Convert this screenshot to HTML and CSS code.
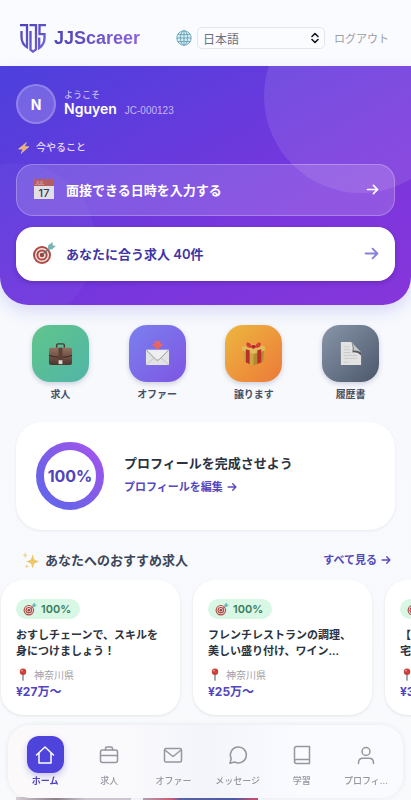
FILE: index.html
```html
<!DOCTYPE html>
<html lang="ja">
<head>
    <meta charset="UTF-8">
    <meta name="viewport" content="width=device-width, initial-scale=1.0">
    <title>JJScareer</title>
    <link rel="stylesheet" href="styles.css">
</head>
<body>

<!-- 共通アイコン -->
<svg class="sprite" aria-hidden="true">
    <defs>
        <linearGradient id="brand" gradientUnits="userSpaceOnUse" x1="0" y1="0" x2="26" y2="29">
            <stop offset="0" stop-color="#4b41b8"/>
            <stop offset="1" stop-color="#7566d6"/>
        </linearGradient>
        <linearGradient id="ring" x1="0" y1="1" x2="1" y2="0">
            <stop offset="0" stop-color="#6366f1"/>
            <stop offset="0.25" stop-color="#6c62e8"/>
            <stop offset="0.8" stop-color="#9557ea"/>
            <stop offset="1" stop-color="#a855f7"/>
        </linearGradient>
        <linearGradient id="leather" x1="0" y1="0" x2="0" y2="1">
            <stop offset="0" stop-color="#95705f"/>
            <stop offset="1" stop-color="#4d342c"/>
        </linearGradient>
    </defs>
    <symbol id="target" viewBox="0 0 24 24">
        <circle cx="10" cy="14" r="9" fill="#b04a44"/>
        <circle cx="10" cy="14" r="7" fill="#f0e6e2"/>
        <circle cx="10" cy="14" r="5.6" fill="#b04a44"/>
        <circle cx="10" cy="14" r="3.6" fill="#f0e6e2"/>
        <circle cx="10" cy="14" r="2.2" fill="#a83a35"/>
        <path d="M10 14 19 6" stroke="#566f77" stroke-width="1.4"/>
        <path d="m15.5 8.500.8-4.200L20.500 1l.2 3.200 3 .7-3.600 3.700z" fill="#79b5b8"/>
    </symbol>
    <symbol id="pin" viewBox="0 0 12 16">
        <path d="M6 7v8" stroke="#777e86" stroke-width="1.6" stroke-linecap="round"/>
        <circle cx="6" cy="4.5" r="4" fill="#c9413c"/>
        <circle cx="4.7" cy="3.2" r="1.2" fill="#ef9a94"/>
    </symbol>
    <symbol id="arrow" viewBox="0 0 14 14">
        <path d="M1.500 7h11M8 2.500 12.500 7 8 11.500" fill="none" stroke="currentColor" stroke-width="1.8" stroke-linecap="round" stroke-linejoin="round"/>
    </symbol>
</svg>

<header class="header">
    <a class="brand" href="#">
        <svg class="brand-mark" viewBox="0 0 26 29" aria-hidden="true">
            <g fill="none" stroke="url(#brand)" stroke-width="2.3">
                <path d="M0 1.200h7v22C3.200 21 1.500 17.500 1.500 12.500V7"/>
                <path d="M9.500 1.200H16v24.300L13 27.600l-2.500-2V7"/>
                <path d="M26 1.200h-6.500v9h5v4c0 4.500-1.800 7.300-5.300 9.800V13.500"/>
            </g>
        </svg>
        <span class="brand-name">JJScareer</span>
    </a>
    <div class="header-tools">
        <svg class="globe" viewBox="0 0 16 16" aria-hidden="true">
            <circle cx="8" cy="8" r="7.2" fill="#d8eef4"/>
            <g fill="none" stroke="#6fa9bb">
                <circle cx="8" cy="8" r="7.2"/>
                <ellipse cx="8" cy="8" rx="3.5" ry="7.2"/>
                <path d="M8 1v14M1 8h14M2 4.500h12M2 11.500h12"/>
            </g>
        </svg>
        <div class="lang">
            <select class="lang-select" aria-label="言語">
                <option>日本語</option>
                <option>English</option>
            </select>
            <svg class="lang-icon" viewBox="0 0 8 12" aria-hidden="true">
                <path d="M1 4.500 4 1.500l3 3M1 7.500l3 3 3-3" fill="none" stroke="#16181d" stroke-width="1.6" stroke-linecap="round" stroke-linejoin="round"/>
            </svg>
        </div>
        <a class="logout" href="#">ログアウト</a>
    </div>
</header>

<main>
    <section class="hero">
        <div class="user">
            <div class="avatar">N</div>
            <div>
                <p class="welcome">ようこそ</p>
                <p class="user-line"><span class="user-name">Nguyen</span><span class="user-id">JC-000123</span></p>
            </div>
        </div>

        <h2 class="todo-title">
            <svg class="bolt" viewBox="0 0 12 12" aria-hidden="true">
                <path d="M8.500.5.500 7l4.600.2L3 11.500l8-6.800-4.700-.1z" fill="#f0b06a" stroke="#f7d9b0" stroke-width=".5"/>
            </svg>
            今やること
        </h2>

        <a class="todo" href="#">
            <svg class="todo-icon" viewBox="0 0 24 24" aria-hidden="true">
                <path d="M2 3h20v19H2z" fill="#e2e0e6"/>
                <path d="M2 2h20v7H2z" fill="#b45e62"/>
                <text class="cal-month" x="3" y="8">JUL</text>
                <text class="cal-day" x="12" y="19.5" text-anchor="middle">17</text>
            </svg>
            <span class="todo-text">面接できる日時を入力する</span>
            <svg class="todo-arrow" aria-hidden="true"><use href="#arrow"/></svg>
        </a>
        <a class="todo todo-white" href="#">
            <svg class="todo-icon" aria-hidden="true"><use href="#target"/></svg>
            <span class="todo-text">あなたに合う求人 40件</span>
            <svg class="todo-arrow" aria-hidden="true"><use href="#arrow"/></svg>
        </a>
    </section>

    <nav class="shortcuts">
        <a class="shortcut" href="#">
            <span class="tile tile-green">
                <svg class="tile-icon" viewBox="0 0 26 26" aria-hidden="true">
                    <path d="M9 7V4.500Q9 3 10.500 3h5Q17 3 17 4.500V7" fill="none" stroke="#4b382f" stroke-width="1.5"/>
                    <rect x="1" y="7" width="24" height="18" rx="2" fill="url(#leather)"/>
                    <path d="M1 15q12 4 24 0" fill="none" stroke="#3c2822"/>
                    <path d="M11 7h4v13h-4z" fill="#5a4035"/>
                    <path d="M11 20h4v4h-4z" fill="#ddd4cd"/>
                </svg>
            </span>
            求人
        </a>
        <a class="shortcut" href="#">
            <span class="tile tile-violet">
                <svg class="tile-icon" viewBox="0 0 26 26" aria-hidden="true">
                    <path d="M1 9h24v16H1z" fill="#e3e3e4"/>
                    <path d="m1 25 9-8M25 25l-9-8" stroke="#b9babd" stroke-width=".8"/>
                    <path d="m1.500 9.500 10 10q1.500 1.200 3 0l10-10" fill="#eee" stroke="#929498"/>
                    <path d="M10 0h6v3h3l-6 6-6-6h3z" fill="#e96660"/>
                </svg>
            </span>
            オファー
        </a>
        <a class="shortcut" href="#">
            <span class="tile tile-orange">
                <svg class="tile-icon" viewBox="0 0 26 26" aria-hidden="true">
                    <path d="m2 9 11 3v13.500L3 21z" fill="#cda544"/>
                    <path d="m24 9-11 3v13.500L23 21z" fill="#b38931"/>
                    <path d="m1 6 12-3 12 3v4l-12 3.500L1 10z" fill="#e0bb58"/>
                    <path d="m5 8.500 4 1V24l-4-1.700zM17 9.500l4-1v13.800L17 24z" fill="#b92f2a"/>
                    <path d="M12 6.500C9 .5 5 .5 5.500 4c.3 3 3.500 3.800 6.500 2.500zM14 6.500c3-6 7-6 6.500-2.500-.3 3-3.500 3.800-6.500 2.500z" fill="#d63c38"/>
                    <circle cx="13" cy="6" r="2" fill="#b62728"/>
                </svg>
            </span>
            譲ります
        </a>
        <a class="shortcut" href="#">
            <span class="tile tile-slate">
                <svg class="tile-icon" viewBox="0 0 26 26" aria-hidden="true">
                    <path d="M3 1h11l10 11v13H3z" fill="#e2e2e1"/>
                    <path d="M14 1q2 4 1 11 5-1 9 3v-3z" fill="#555b63"/>
                    <path d="M14 1 24 12q-4-3-8-2 1-5-2-9z" fill="#c7c9ca"/>
                    <path d="M6 6h6M6 9h7M6 12h7M6 15h14M6 18h14M6 22h5" stroke="#c8c9ca"/>
                </svg>
            </span>
            履歴書
        </a>
    </nav>

    <section class="profile">
        <div class="progress">
            <svg class="progress-ring" viewBox="0 0 68 68" aria-hidden="true">
                <circle cx="34" cy="34" r="30" fill="none" stroke="url(#ring)" stroke-width="8"/>
            </svg>
            <span class="progress-value">100%</span>
        </div>
        <div class="profile-body">
            <h2 class="profile-title">プロフィールを完成させよう</h2>
            <a class="link" href="#">プロフィールを編集 <svg class="link-arrow" aria-hidden="true"><use href="#arrow"/></svg></a>
        </div>
    </section>

    <section>
        <div class="section-head">
            <svg class="sparkles" viewBox="0 0 16 16" aria-hidden="true">
                <path d="m10 2 1.500 5L16 9l-4.500 1.800L10 15.500l-1.500-4.700L4 9l4.500-2z" fill="#edc765"/>
                <path d="m3 0 .8 2.300L6 3l-2.200.8L3 6l-.8-2.200L0 3l2.200-.7zM4.500 11l.6 1.900L7 13.500l-1.900.6-.6 1.900-.6-1.900-1.900-.6 1.900-.6z" fill="#f1d792"/>
            </svg>
            <h2 class="section-title">あなたへのおすすめ求人</h2>
            <a class="link" href="#">すべて見る <svg class="link-arrow" aria-hidden="true"><use href="#arrow"/></svg></a>
        </div>

        <div class="jobs">
            <article class="job">
                <span class="match"><svg class="match-icon" aria-hidden="true"><use href="#target"/></svg>100%</span>
                <h3 class="job-title">おすしチェーンで、スキルを身につけましょう！</h3>
                <p class="place"><svg class="pin" aria-hidden="true"><use href="#pin"/></svg>神奈川県</p>
                <p class="salary">¥27万〜</p>
            </article>
            <article class="job">
                <span class="match"><svg class="match-icon" aria-hidden="true"><use href="#target"/></svg>100%</span>
                <h3 class="job-title">フレンチレストランの調理、<br>美しい盛り付け、ワイン...</h3>
                <p class="place"><svg class="pin" aria-hidden="true"><use href="#pin"/></svg>神奈川県</p>
                <p class="salary">¥25万〜</p>
            </article>
            <article class="job">
                <span class="match"><svg class="match-icon" aria-hidden="true"><use href="#target"/></svg>100%</span>
                <h3 class="job-title">【<br>宅</h3>
                <p class="place"><svg class="pin" aria-hidden="true"><use href="#pin"/></svg></p>
                <p class="salary">¥3</p>
            </article>
        </div>
    </section>

    <!-- 写真 -->
    <section class="photos">
        <div class="photo photo-pink"></div>
        <div class="photo photo-blue"></div>
    </section>
</main>

<nav class="tabbar">
    <a class="tab tab-active" href="#">
        <span class="tab-icon">
            <svg viewBox="0 0 20 20" aria-hidden="true"><path d="M1.500 10 10 2l8.500 8M4 8v10h12V8"/></svg>
        </span>
        <span class="tab-label">ホーム</span>
    </a>
    <a class="tab" href="#">
        <span class="tab-icon">
            <svg viewBox="0 0 20 20" aria-hidden="true"><rect x="1.5" y="5" width="17" height="12.5" rx="2"/><path d="M6.500 5V3.500Q6.500 2 8 2h4q1.500 0 1.500 1.500V5M1.500 10.500h17"/></svg>
        </span>
        <span class="tab-label">求人</span>
    </a>
    <a class="tab" href="#">
        <span class="tab-icon">
            <svg viewBox="0 0 20 20" aria-hidden="true"><rect x="1.5" y="3.5" width="17" height="13.5" rx="1.5"/><path d="m2.500 5.500 7.500 6 7.500-6"/></svg>
        </span>
        <span class="tab-label">オファー</span>
    </a>
    <a class="tab" href="#">
        <span class="tab-icon">
            <svg viewBox="0 0 20 20" aria-hidden="true"><path d="M2 18.200 3.200 13.500A8 8 0 1 1 6.600 17z"/></svg>
        </span>
        <span class="tab-label">メッセージ</span>
    </a>
    <a class="tab" href="#">
        <span class="tab-icon">
            <svg viewBox="0 0 20 20" aria-hidden="true"><path d="M17.500 14.500V1.500H4.500q-2 0-2 2V16.500M17.500 14.500H4.500a2 2 0 0 0 0 4h13z"/></svg>
        </span>
        <span class="tab-label">学習</span>
    </a>
    <a class="tab" href="#">
        <span class="tab-icon">
            <svg viewBox="0 0 20 20" aria-hidden="true"><circle cx="10" cy="6.5" r="4"/><path d="M2.500 18.500v-.8c0-3 2-4.500 4.500-4.500h6c2.500 0 4.500 1.500 4.500 4.500v.8"/></svg>
        </span>
        <span class="tab-label">プロフィ...</span>
    </a>
</nav>

</body>
</html>
```

FILE: styles.css
```css
* {
    box-sizing: border-box;
}
body {
    margin: 0;
    background: linear-gradient(#f6f8fe, #f8fafc);
    color: #2b3240;
    font-family: Inter, "Noto Sans CJK JP", sans-serif;
    font-size: 13px;
    overflow-x: hidden;
}
h2, h3, p {
    margin: 0;
}
a {
    color: inherit;
    text-decoration: none;
}
svg {
    flex-shrink: 0;
}
.sprite {
    position: absolute;
    width: 0;
    height: 0;
}

/* ヘッダー */
.header {
    display: flex;
    align-items: center;
    justify-content: space-between;
    height: 66px;
    padding: 10px 22px 0 20px;
    background: #fafbff;
}
.brand {
    display: flex;
    align-items: center;
    gap: 8px;
}
.brand-mark {
    width: 26px;
    height: 29px;
}
.brand-name {
    font-family: "Liberation Sans", Arial, sans-serif;
    font-size: 18px;
    font-weight: bold;
    background: linear-gradient(90deg, #4c43bb, #8c62d6);
    background-clip: text;
    color: transparent;
}
.header-tools {
    display: flex;
    align-items: center;
    gap: 5px;
}
.globe {
    width: 16px;
    height: 16px;
}
.lang {
    position: relative;
}
.lang-select {
    display: block;
    appearance: none;
    width: 128px;
    height: 22px;
    padding: 0 20px 0 5px;
    border: 1px solid #e4e6ec;
    border-radius: 5px;
    background: #fbfcff;
    color: #6c7078;
    font-family: "Noto Sans CJK JP", sans-serif;
    font-size: 12px;
}
.lang-icon {
    position: absolute;
    top: 5px;
    right: 6px;
    width: 8px;
    height: 12px;
    pointer-events: none;
}
.logout {
    margin-left: 4px;
    color: #9a9da5;
    font-size: 11px;
}

/* ヒーロー */
.hero {
    position: relative;
    overflow: hidden;
    padding: 18px 16px 24px;
    border-radius: 0 0 28px 28px;
    background: linear-gradient(150deg, #4c40dc, #7a36dd 65%, #8636da);
    box-shadow: 0 6px 16px rgba(79, 70, 229, 0.18);
    color: #fff;
}
.hero::before,
.hero::after {
    content: "";
    position: absolute;
    border-radius: 50%;
}
.hero::before {
    top: -67px;
    right: -47px;
    width: 194px;
    height: 194px;
    background: rgba(255, 255, 255, 0.1);
}
.hero::after {
    bottom: -18px;
    left: -64px;
    width: 160px;
    height: 160px;
    background: rgba(255, 255, 255, 0.03);
}
.user {
    display: flex;
    align-items: center;
    gap: 8px;
}
.avatar {
    display: flex;
    align-items: center;
    justify-content: center;
    width: 40px;
    height: 40px;
    border: 2px solid rgba(255, 255, 255, 0.2);
    border-radius: 50%;
    background: rgba(255, 255, 255, 0.2);
    font-size: 14px;
    font-weight: bold;
}
.welcome {
    color: #d3cdf8;
    font-size: 9px;
    line-height: 12px;
}
.user-line {
    display: flex;
    align-items: baseline;
    gap: 8px;
    line-height: 16px;
}
.user-name {
    font-size: 14px;
    font-weight: 600;
}
.user-id {
    color: #c4b8f4;
    font-family: "Liberation Sans", Arial, sans-serif;
    font-size: 10px;
}
.todo-title {
    display: flex;
    align-items: center;
    gap: 6px;
    margin: 16px 0 9px 2px;
    color: #e4defb;
    font-size: 10px;
    font-weight: 500;
    line-height: 15px;
}
.bolt {
    width: 12px;
    height: 12px;
}
.todo {
    position: relative;
    z-index: 1;
    display: flex;
    align-items: center;
    gap: 10px;
    height: 52px;
    padding: 0 15px 2px;
    border: 1px solid rgba(255, 255, 255, 0.25);
    border-radius: 17px;
    background: rgba(255, 255, 255, 0.16);
}
.todo-white {
    height: 54px;
    margin-top: 11px;
    border-color: #fff;
    background: #fff;
    box-shadow: 0 2px 4px rgba(40, 10, 100, 0.25);
    color: #4034a4;
}
.todo-icon {
    width: 24px;
    height: 24px;
}
.cal-month {
    fill: #e4b9ba;
    font-size: 5px;
}
.cal-day {
    fill: #3c3c44;
    font-size: 11px;
    font-weight: 500;
}
.todo-text {
    flex: 1;
    font-weight: 600;
}
.todo-arrow {
    width: 13px;
    height: 13px;
}
.todo-white .todo-arrow {
    width: 15px;
    height: 15px;
    color: #8681d9;
}

/* ショートカット */
.shortcuts {
    display: flex;
    padding: 20px 12px;
}
.shortcut {
    flex: 1;
    display: flex;
    flex-direction: column;
    align-items: center;
    gap: 5px;
    color: #475064;
    font-size: 10px;
    font-weight: 600;
    line-height: 15px;
}
.tile {
    display: flex;
    align-items: center;
    justify-content: center;
    width: 57px;
    height: 57px;
    border-radius: 18px;
    box-shadow: 0 2px 5px rgba(40, 50, 90, 0.2);
}
.tile-icon {
    width: 25px;
    height: 25px;
}
.tile-green {
    background: linear-gradient(135deg, #60c58b, #50b5a6);
}
.tile-violet {
    background: linear-gradient(135deg, #7b80ee, #7e55e3);
}
.tile-orange {
    background: linear-gradient(135deg, #edb73f, #ec7938);
}
.tile-slate {
    background: linear-gradient(135deg, #8995a9, #4b576b);
}

/* プロフィール */
.profile {
    display: flex;
    align-items: center;
    gap: 20px;
    margin: 0 16px;
    padding: 20px;
    border-radius: 26px;
    background: #fff;
    box-shadow: 0 1px 3px rgba(30, 40, 80, 0.08);
}
.progress {
    display: grid;
    place-items: center;
}
.progress-ring,
.progress-value {
    grid-area: 1 / 1;
}
.progress-ring {
    width: 68px;
    height: 68px;
}
.progress-value {
    color: #5044bd;
    font-size: 16px;
    font-weight: bold;
}
.profile-body {
    padding-bottom: 4px;
}
.profile-title {
    margin-bottom: 5px;
    font-size: 13px;
    font-weight: 600;
    line-height: 20px;
}
.link {
    display: flex;
    align-items: center;
    gap: 4px;
    color: #5548bd;
    font-size: 11px;
    font-weight: 600;
    line-height: 18px;
}
.link-arrow {
    width: 10px;
    height: 10px;
}

/* おすすめ求人 */
.section-head {
    display: flex;
    align-items: center;
    gap: 6px;
    padding: 20px 20px 10px 22px;
}
.sparkles {
    width: 17px;
    height: 17px;
}
.section-title {
    flex: 1;
    color: #3c4658;
    font-size: 13px;
    font-weight: 600;
    line-height: 20px;
}
.jobs {
    display: flex;
    gap: 13px;
    padding: 0 1px 4px;
    overflow: hidden;
}
.job {
    flex: none;
    width: 179px;
    padding: 19px 15px 14px;
    border-radius: 22px;
    background: #fff;
    box-shadow: 0 1px 3px rgba(30, 40, 80, 0.1);
}
.match {
    display: inline-flex;
    align-items: center;
    gap: 4px;
    height: 20px;
    padding: 0 9px 0 7px;
    border-radius: 10px;
    background: #d8f7e4;
    color: #3b7a5d;
    font-size: 11px;
    font-weight: 600;
}
.match-icon {
    width: 14px;
    height: 14px;
}
.job-title {
    margin-top: 8px;
    font-size: 11px;
    font-weight: 600;
    line-height: 16px;
}
.place {
    display: flex;
    align-items: center;
    gap: 6px;
    height: 18px;
    margin-top: 6px;
    padding-left: 2px;
    color: #9ba1af;
    font-size: 10px;
}
.pin {
    width: 10px;
    height: 13px;
}
.salary {
    color: #5145c0;
    font-size: 12px;
    font-weight: bold;
    line-height: 18px;
}

.photos {
    display: flex;
    gap: 12px;
    padding: 78px 16px 0;
}
.photo {
    width: 115px;
    height: 15px;
}
.photo-pink {
    background: linear-gradient(90deg, #d9cfd8, #8f8488 35%, #d5cad6 60%);
}
.photo-blue {
    background: linear-gradient(90deg, #b5a3b3, #d05f77 25%, #5b64a5 32%, #4f5da5 80%, #c15070 95%);
}

/* タブバー */
.tabbar {
    position: fixed;
    right: 8px;
    bottom: 2px;
    left: 8px;
    z-index: 2;
    display: flex;
    padding: 11px 5px 10px;
    border-radius: 22px;
    background: linear-gradient(90deg, #fbf9fa, #faf9fc 30%, #f3f5fb 50%, #fafbff 75%);
    box-shadow: 0 0 5px rgba(60, 70, 120, 0.1);
}
.tab {
    flex: 1;
    min-width: 0;
    display: flex;
    flex-direction: column;
    align-items: center;
    color: #94979f;
}
.tab-icon {
    display: flex;
    align-items: center;
    justify-content: center;
    width: 37px;
    height: 37px;
    border-radius: 12px;
}
.tab-icon svg {
    width: 20px;
    height: 20px;
    fill: none;
    stroke: currentColor;
    stroke-width: 1.5;
    stroke-linecap: round;
    stroke-linejoin: round;
}
.tab-label {
    font-size: 9px;
    font-weight: 500;
    line-height: 15px;
    white-space: nowrap;
}
.tab-active {
    color: #5044bd;
}
.tab-active .tab-label {
    font-weight: bold;
}
.tab-active .tab-icon {
    background: #4e43db;
    box-shadow: 0 3px 6px rgba(78, 67, 219, 0.3);
    color: #fff;
}
```
